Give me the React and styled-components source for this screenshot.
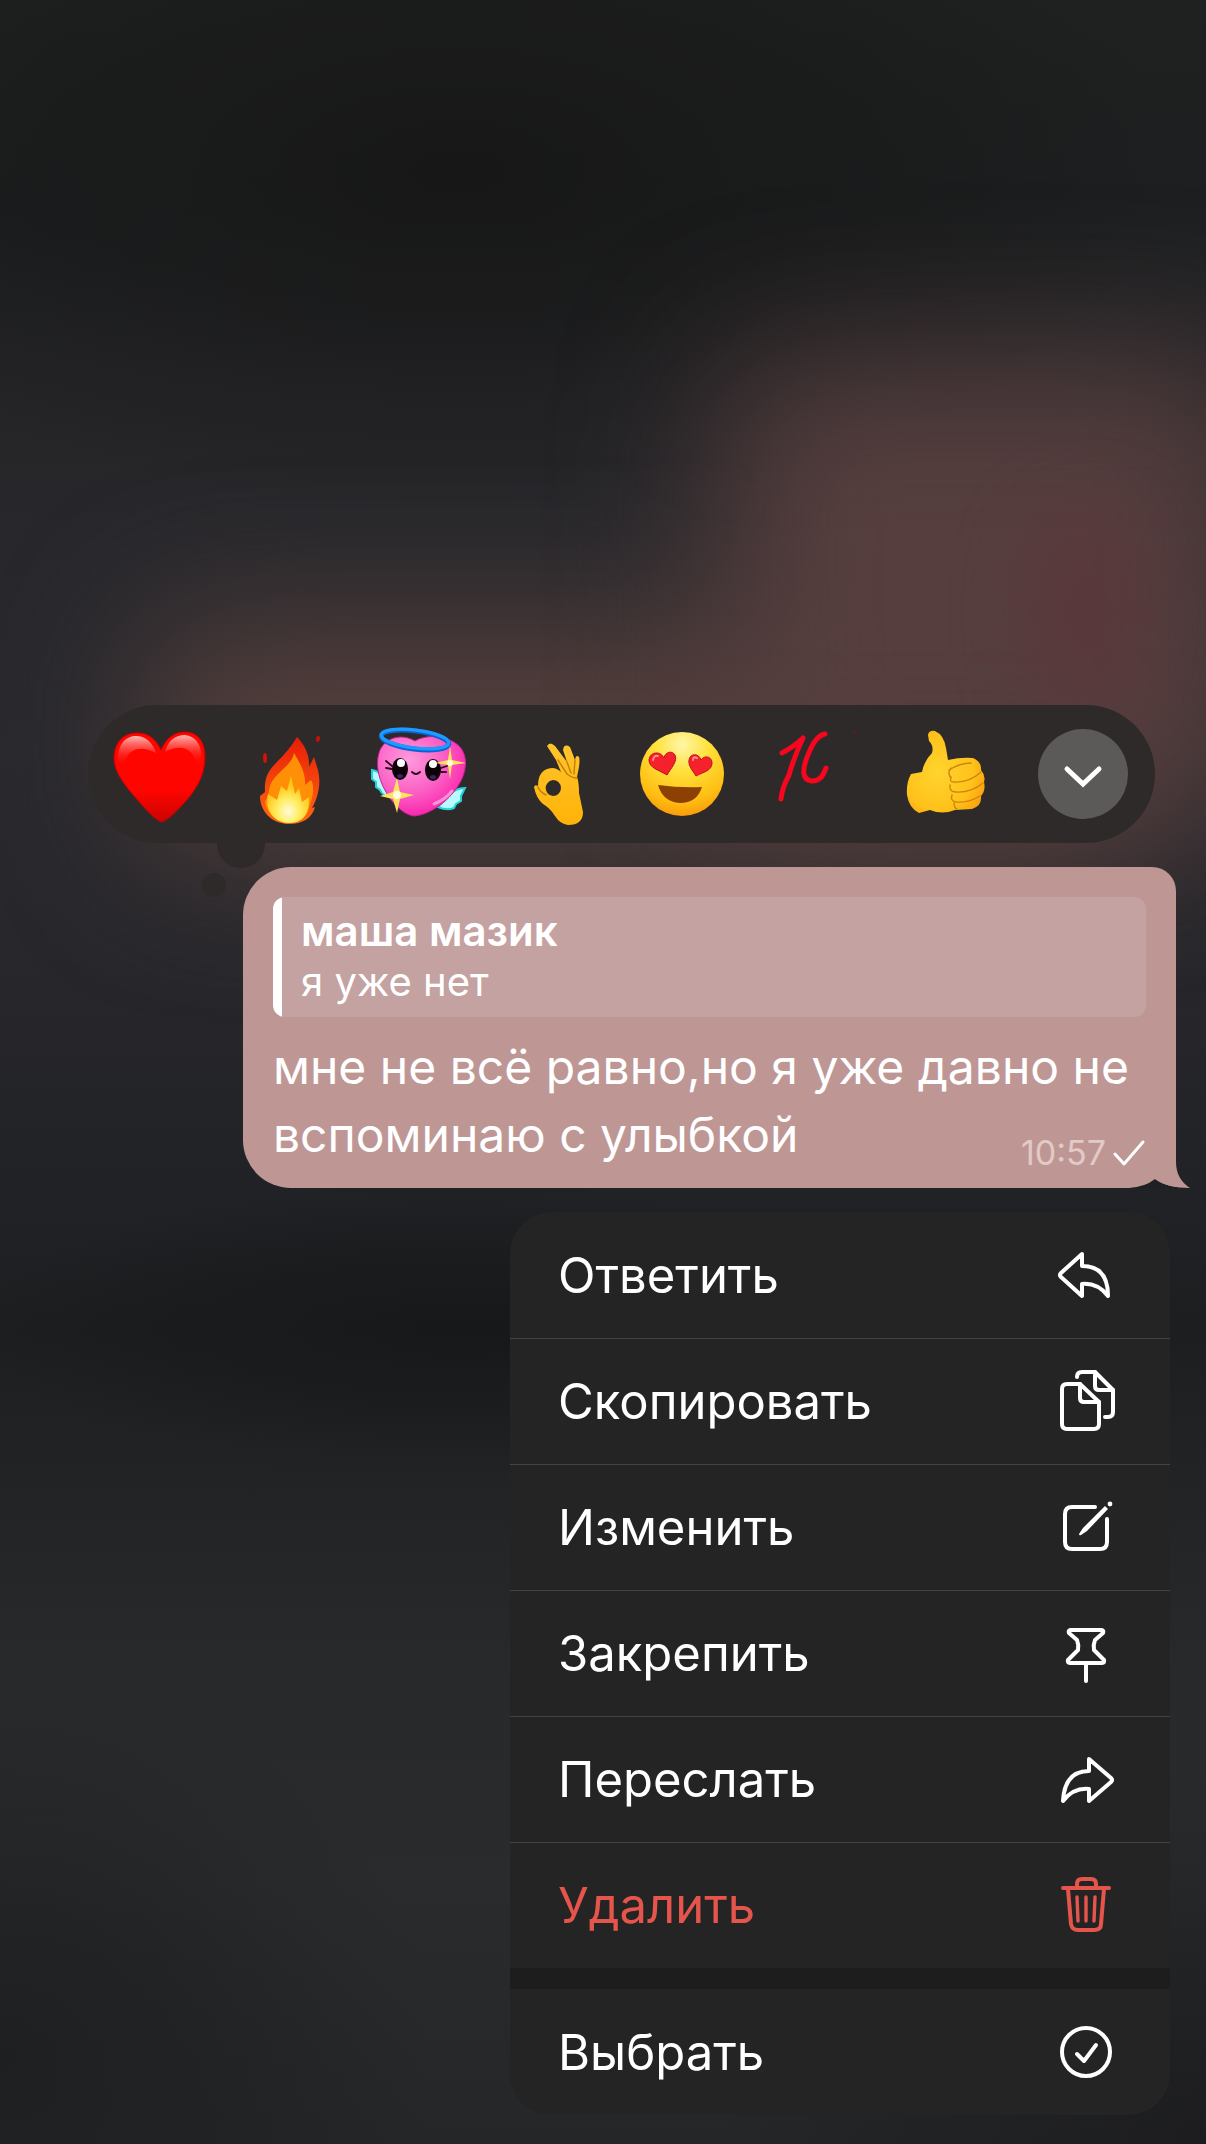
import styled, { createGlobalStyle } from "styled-components";

const menuItems = [
  { key: "reply", label: "Ответить" },
  { key: "copy", label: "Скопировать" },
  { key: "edit", label: "Изменить" },
  { key: "pin", label: "Закрепить" },
  { key: "forward", label: "Переслать" },
  { key: "remove", label: "Удалить", danger: true },
];

const icons = {
  reply: (
    <path d="M32 15 L11 34 Q9 36 11 38 L32 57 V45 C43 44 51 48 58 57 C58 39 51 27 32 27 Z" />
  ),
  copy: (
    <>
      <path d="M30 18 H17 Q12 18 12 23 V58 Q12 63 17 63 H44 Q49 63 49 58 V36 Z" />
      <path d="M30 18 V32 Q30 36 34 36 H49" />
      <path d="M27 11 Q27 6 32 6 H45 L63 24 V46 Q63 51 58 51 H55" />
      <path d="M45 6 V20 Q45 24 49 24 H63" />
    </>
  ),
  edit: (
    <>
      <path d="M45 15 H22 Q15 15 15 22 V50 Q15 57 22 57 H50 Q57 57 57 50 V27" />
      <path
        d="M55 14 L33 36 L29 42 Q29 44 31 43 L37 39 L58 17 Z"
        fill="currentColor"
        stroke="none"
      />
      <circle cx="60" cy="12" r="2.4" fill="currentColor" stroke="none" />
    </>
  ),
  pin: (
    <>
      <path d="M20 12 H52 Q54 13 53 15 L45 22 Q43 27 44 32 L54 42 Q55 45 52 45 H20 Q17 45 18 42 L28 32 Q29 27 27 22 L19 15 Q18 13 20 12 Z" />
      <path d="M36 46 V63" />
    </>
  ),
  forward: (
    <path d="M39 15 L61 34 Q63 36 61 38 L39 57 V45 C29 44 20 48 13 57 C14 38 22 27 39 27 Z" />
  ),
  remove: (
    <>
      <path d="M13 18 H59" />
      <path d="M27 17 V14 Q27 9 32 9 H41 Q46 9 46 14 V17" />
      <path d="M18 19 L21 54 Q22 60 28 60 H44 Q51 60 51 54 L54 19" />
      <path d="M27 27 L28 51 M36 27 V51 M45 27 L44 51" strokeWidth="3.4" />
    </>
  ),
  select: (
    <>
      <circle cx="36" cy="36" r="24" />
      <path d="M27 38 L34 45 L46 29" />
    </>
  ),
};

const MenuIcon = ({ name }) => (
  <IconSvg viewBox="0 0 72 72" aria-hidden="true">
    {icons[name]}
  </IconSvg>
);

const Heart = () => (
  <Emoji viewBox="0 0 96 96">
    <defs>
      <linearGradient id="heartShine" x1="0" y1="0" x2="0" y2="1">
        <stop offset="0" stopColor="#ffb9b4" />
        <stop offset="1" stopColor="#ff1a12" stopOpacity="0" />
      </linearGradient>
      <linearGradient id="heartFill" x1="0" y1="0" x2="0" y2="1">
        <stop offset="0.65" stopColor="#fe0500" />
        <stop offset="1" stopColor="#c80400" />
      </linearGradient>
    </defs>
    <path
      d="M49 24 C43 11 34 6 23 7 C9 8 2 19 2 32 C2 46 12 58 22 70 C31 80 42 94 50 96 C58 93 70 80 79 69 C88 57 93 45 93 31 C93 16 86 6 73 6 C62 6 54 12 49 24 Z"
      fill="url(#heartFill)"
      stroke="#c80000"
      strokeWidth="1"
    />
    <path
      d="M6 36 C5 18 14 10 24 10 C34 10 41 17 44 27 C31 20 17 20 12 38 Q8 42 6 36 Z"
      fill="url(#heartShine)"
    />
    <path
      d="M53 26 C56 14 64 9 73 9 C84 10 91 20 89 35 Q87 40 84 37 C80 19 65 19 53 26 Z"
      fill="url(#heartShine)"
    />
  </Emoji>
);

const Fire = () => (
  <Emoji viewBox="0 0 96 96">
    <defs>
      <radialGradient id="fireCore" cx="0.5" cy="0.75" r="0.55">
        <stop offset="0" stopColor="#fffcd8" />
        <stop offset="0.5" stopColor="#ffed60" />
        <stop offset="1" stopColor="#ffc61a" />
      </radialGradient>
      <linearGradient id="fireEdge" x1="0" y1="0" x2="0" y2="1">
        <stop offset="0" stopColor="#e81c08" />
        <stop offset="1" stopColor="#ff6a10" />
      </linearGradient>
    </defs>
    <path
      d="M55 11 C50 20 42 29 33 38 C26 45 22 53 23 66 L18 70 C18 84 28 97 46 98 C61 98 70 92 73 81 L70 82 C77 70 79 56 76 44 L72 31 L67 41 C68 29 62 18 55 11 Z"
      fill="url(#fireEdge)"
    />
    <path
      d="M52 27 C50 38 40 42 31 54 C25 63 29 66 23 76 C26 91 37 97 47 97 C59 97 66 90 68 78 C72 69 72 58 69 54 L63 59 C64 46 57 36 52 27 Z"
      fill="#ff8f06"
    />
    <path
      d="M49 50 L45 65 L39 60 L35 74 L26 68 C22 86 34 97 47 97 C60 97 68 89 67 71 L60 76 L57 62 L53 68 Z"
      fill="url(#fireCore)"
    />
    <ellipse cx="23" cy="32" rx="2" ry="5" fill="#d21206" />
    <ellipse cx="76" cy="13" rx="2" ry="3" fill="#c21206" transform="rotate(15 76 13)" />
  </Emoji>
);

const AngelHeart = () => (
  <Emoji viewBox="0 0 96 96">
    <defs>
      <radialGradient id="angelBody" cx="0.35" cy="0.3" r="0.75">
        <stop offset="0" stopColor="#ff9bdd" />
        <stop offset="0.55" stopColor="#fb5fc4" />
        <stop offset="1" stopColor="#fb1faa" />
      </radialGradient>
    </defs>
    <path
      d="M0 44 Q8 45 13 54 L17 71 Q10 69 8 64 L4 61 L4 56 L0 53 Z"
      fill="#b6fbff"
      stroke="#23d0dc"
      strokeWidth="2"
    />
    <path
      d="M93 62 Q83 62 76 70 L66 81 Q75 85 82 82 L84 78 L89 75 L89 70 Z"
      fill="#b6fbff"
      stroke="#23d0dc"
      strokeWidth="2"
    />
    <path
      d="M43 15 C31 8 15 10 8 24 C4 34 5 46 10 58 C17 74 29 88 42 90 C57 89 76 76 86 60 C95 46 97 29 86 19 C72 8 53 9 43 15 Z"
      fill="url(#angelBody)"
      stroke="#c3228f"
      strokeWidth="1"
    />
    <path d="M62 78 Q74 73 80 65" stroke="#ff8fd6" strokeWidth="3" fill="none" strokeLinecap="round" />
    <ellipse cx="43" cy="14" rx="34" ry="9" transform="rotate(7 43 14)" fill="none" stroke="#0a62d6" strokeWidth="5" />
    <ellipse cx="43" cy="13" rx="34" ry="9" transform="rotate(7 43 13)" fill="none" stroke="#1e9bff" strokeWidth="3.4" />
    <ellipse cx="28" cy="43" rx="8" ry="11" fill="#0d0208" />
    <ellipse cx="61" cy="44" rx="8" ry="11" fill="#0d0208" />
    <circle cx="29" cy="37" r="4" fill="#fff" />
    <circle cx="61" cy="38" r="4" fill="#fff" />
    <ellipse cx="28" cy="50" rx="3" ry="2" fill="#3d1f63" />
    <ellipse cx="61" cy="51" rx="3" ry="2" fill="#3d1f63" />
    <path
      d="M40 46 Q44 50 48 46 M20 40 L14 35 M20 43 L14 42 M69 42 L75 40 M69 46 L74 46"
      stroke="#2c0620"
      strokeWidth="1.8"
      fill="none"
      strokeLinecap="round"
    />
    <path d="M78 20 L80 34 L94 37 L80 39 L78 53 L76 39 L63 37 L76 34 Z" fill="#ffe35c" />
    <path d="M25 52 L28 66 L42 69 L28 73 L25 87 L21 73 L8 70 L21 66 Z" fill="#ffe35c" />
    <circle cx="78" cy="37" r="3" fill="#fffbe0" />
    <circle cx="25" cy="69" r="4" fill="#fffbe0" />
  </Emoji>
);

const OkHand = () => (
  <Emoji viewBox="0 0 96 96">
    <defs>
      <linearGradient id="okSkin" x1="0" y1="0" x2="0" y2="1">
        <stop offset="0" stopColor="#ffc42c" />
        <stop offset="1" stopColor="#ffb308" />
      </linearGradient>
    </defs>
    <path
      d="M45 20 Q48 15 53 20 L65 36 L61 24 Q62 17 68 21 L73 34 Q74 28 77 31 Q78 33 77 41 L75 51 Q77 56 77 67 L81 86 Q81 99 66 99 Q58 98 53 90 Q48 82 41 78 Q34 72 32 61 Q33 58 36 60 Q36 43 50 42 Q55 42 59 46 L54 34 Z M51 54 A8 8 0 0 0 44 64 Q45 69 51 70 A8 8 0 0 0 59 62 A8 8 0 0 0 51 54 Z"
      fill="url(#okSkin)"
      fillRule="evenodd"
    />
    <path
      d="M56 34 L65 48 Q70 52 75 52 M65 36 L69 47 M73 34 L72 48 M36 61 Q38 66 44 69"
      fill="none"
      stroke="#c77b05"
      strokeWidth="1.4"
      strokeLinecap="round"
    />
  </Emoji>
);

const HeartEyes = () => (
  <Emoji viewBox="0 0 96 96">
    <defs>
      <radialGradient id="faceFill" cx="0.5" cy="0.15" r="0.9">
        <stop offset="0" stopColor="#fff6a8" />
        <stop offset="0.35" stopColor="#ffe13c" />
        <stop offset="0.75" stopColor="#ffbe12" />
        <stop offset="1" stopColor="#f7920a" />
      </radialGradient>
    </defs>
    <circle cx="50" cy="48" r="42" fill="url(#faceFill)" />
    <path
      d="M32 32 C29 25 18 25 17 34 C17 42 27 44 35 49 C39 42 46 35 43 29 C40 24 33 26 32 32 Z"
      fill="#f5222c"
      stroke="#bd1119"
      strokeWidth="1"
    />
    <path
      d="M69 34 C67 27 58 27 57 34 C56 40 61 45 64 50 C71 46 80 45 80 37 C80 30 72 29 69 34 Z"
      fill="#f5222c"
      stroke="#bd1119"
      strokeWidth="1"
    />
    <path d="M21 34 Q22 29 26 30 M61 34 Q61 30 65 32" stroke="#ff8d8d" strokeWidth="2" fill="none" strokeLinecap="round" />
    <path d="M26 59 Q48 62 70 61 Q65 77 48 77 Q31 76 26 59 Z" fill="#8d4003" />
  </Emoji>
);

const Hundred = () => (
  <Emoji viewBox="0 0 96 96">
    <path
      d="M20 27 Q33 20 41 12 Q32 31 27 49 Q20 62 19 73"
      fill="none"
      stroke="#f8051f"
      strokeWidth="5"
      strokeLinecap="round"
      strokeLinejoin="round"
    />
    <path
      d="M63 8 Q55 9 48 24 C38 46 41 54 50 55 C58 55 61 50 64 42"
      fill="none"
      stroke="#f8051f"
      strokeWidth="5"
      strokeLinecap="round"
    />
    <circle cx="93" cy="6" r="1.5" fill="#6a1420" />
  </Emoji>
);

const ThumbUp = () => (
  <Emoji viewBox="0 0 96 96">
    <defs>
      <radialGradient id="thumbSkin" cx="0.4" cy="0.5" r="0.65">
        <stop offset="0" stopColor="#ffd42e" />
        <stop offset="0.7" stopColor="#ffc21a" />
        <stop offset="1" stopColor="#fba30f" />
      </radialGradient>
    </defs>
    <path
      d="M36 9 Q37 4 43 5 Q52 9 54 22 L56 34 Q69 31 81 32 Q90 36 89 44 Q94 50 92 56 Q94 64 89 70 Q90 80 80 83 L63 84 Q50 89 38 84 L27 87 Q17 82 15 69 Q14 57 19 48 L30 46 Q32 35 40 27 Q42 20 37 15 Z"
      fill="url(#thumbSkin)"
    />
    <path
      d="M57 44 Q68 37 79 37 M59 51 Q57 56 62 56 Q77 57 89 46 M58 59 Q57 66 64 66 Q79 67 91 57 M60 69 Q58 75 64 76 Q77 77 88 70 M59 42 Q55 47 59 52 M62 77 Q62 82 65 83"
      fill="none"
      stroke="#cf850c"
      strokeWidth="1.4"
      strokeLinecap="round"
    />
  </Emoji>
);

const reactions = [
  { key: "Сердце", Picture: Heart },
  { key: "Огонь", Picture: Fire },
  { key: "Ангел", Picture: AngelHeart },
  { key: "Окей", Picture: OkHand },
  { key: "Влюблён", Picture: HeartEyes },
  { key: "Сто", Picture: Hundred },
  { key: "Палец вверх", Picture: ThumbUp },
];

const App = () => {
  return (
    <>
      <GlobalStyle />
      <Page>
        <Backdrop>
          <WideGlow />
          <RightGlow />
          <RedGlow />
        </Backdrop>
        <ReactionBar>
          <ReactionList>
            {reactions.map(({ key, Picture }) => (
              <ReactionBtn key={key} type="button" aria-label={key}>
                <Picture />
              </ReactionBtn>
            ))}
          </ReactionList>
          <MoreBtn type="button" aria-label="Ещё">
            <svg width="42" height="24" viewBox="0 0 42 24">
              <path
                d="M5 5 L21 20 L37 5"
                fill="none"
                stroke="#fff"
                strokeWidth="5"
                strokeLinecap="round"
              />
            </svg>
          </MoreBtn>
        </ReactionBar>
        <Bubble>
          <Reply>
            <ReplyName>маша мазик</ReplyName>
            <ReplyText>я уже нет</ReplyText>
          </Reply>
          <Message>
            мне не всё равно,но я уже давно не вспоминаю с улыбкой
            <Meta>
              <time>10:57</time>
              <svg width="34" height="28" viewBox="0 0 34 28">
                <path
                  d="M3 15 L12 25 L31 3"
                  fill="none"
                  stroke="#fff"
                  strokeWidth="3"
                  strokeLinecap="round"
                  strokeLinejoin="round"
                />
              </svg>
            </Meta>
          </Message>
          <Tail viewBox="0 0 62 30">
            <path d="M0 30 Q16 29 26 21 Q38 30 62 30 Z" fill="#1f2025" />
            <path d="M46 4 H47 Q47 21 61 30 Q38 30 26 21 Z" fill="#be9795" />
          </Tail>
        </Bubble>
        <Menu>
          {menuItems.map((item) => (
            <MenuItem key={item.key} type="button" $danger={item.danger}>
              {item.label}
              <MenuIcon name={item.key} />
            </MenuItem>
          ))}
          <MenuGap />
          <MenuItem type="button">
            Выбрать
            <MenuIcon name="select" />
          </MenuItem>
        </Menu>
      </Page>
    </>
  );
};

export default App;

const GlobalStyle = createGlobalStyle`
  * {
    box-sizing: border-box;
  }
  body {
    margin: 0;
    background: #1f2022;
    font-family: Inter, "Liberation Sans", sans-serif;
    color: #fff;
  }
  button {
    padding: 0;
    border: none;
    background: none;
    font: inherit;
    color: inherit;
    cursor: pointer;
  }
`;

const Page = styled.main`
  position: relative;
  display: flex;
  flex-direction: column;
  gap: 24px;
  min-height: 100vh;
  padding: 705px 30px 28px 88px;
`;

const Backdrop = styled.div`
  position: absolute;
  inset: 0;
  z-index: -1;
  overflow: hidden;
  background: radial-gradient(
      ellipse 60% 16% at 38% 8%,
      rgba(22, 22, 22, 0.9),
      rgba(22, 22, 22, 0)
    ),
    radial-gradient(
      ellipse 40% 7% at 38% 62%,
      rgba(20, 21, 22, 0.7),
      rgba(20, 21, 22, 0)
    ),
    radial-gradient(
      ellipse 36% 18% at 0% 96%,
      rgba(28, 30, 31, 0.9),
      rgba(28, 30, 31, 0)
    ),
    radial-gradient(
      ellipse 40% 18% at 100% 100%,
      rgba(28, 28, 30, 0.9),
      rgba(28, 28, 30, 0)
    ),
    linear-gradient(
      #1f2020 0%,
      #1d1f20 10%,
      #252528 18%,
      #28282c 26%,
      #29292e 35%,
      #27272b 46%,
      #222327 54%,
      #1c1e20 62%,
      #222425 70%,
      #27292a 78%,
      #292b2c 88%,
      #242627 100%
    );
`;

const Glow = styled.div`
  position: absolute;
  border-radius: 60px;
`;

const WideGlow = styled(Glow)`
  left: 12%;
  right: 4%;
  top: 29%;
  height: 11%;
  background: #543f3c;
  filter: blur(70px);
`;

const RightGlow = styled(Glow)`
  left: 60%;
  right: -4%;
  top: 17%;
  height: 21%;
  background: #563e3e;
  filter: blur(76px);
`;

const RedGlow = styled(Glow)`
  left: 86%;
  right: 6%;
  top: 24%;
  height: 9%;
  background: #5c343a;
  filter: blur(40px);
  opacity: 0.7;
`;

const ReactionBar = styled.div`
  position: relative;
  display: flex;
  align-items: center;
  gap: 50px;
  height: 138px;
  margin-right: 21px;
  padding: 0 27px 0 24px;
  border-radius: 69px;
  background: #2f2a2a;
  &::before,
  &::after {
    content: "";
    position: absolute;
    border-radius: 50%;
    background: #2f2a2a;
  }
  &::before {
    left: 129px;
    bottom: -25px;
    width: 48px;
    height: 48px;
  }
  &::after {
    left: 114px;
    bottom: -54px;
    width: 24px;
    height: 24px;
  }
`;

const ReactionList = styled.div`
  position: relative;
  z-index: 1;
  flex: 1;
  display: flex;
  justify-content: space-between;
`;

const ReactionBtn = styled.button`
  width: 96px;
  height: 96px;
`;

const Emoji = styled.svg`
  display: block;
  width: 96px;
  height: 96px;
  overflow: visible;
`;

const MoreBtn = styled.button`
  display: flex;
  align-items: center;
  justify-content: center;
  width: 90px;
  height: 90px;
  padding-top: 4px;
  border-radius: 50%;
  background: #5c5a59;
`;

const Bubble = styled.article`
  position: relative;
  margin-left: 155px;
  padding: 30px 30px 15px;
  border-radius: 48px 24px 0 48px;
  background: #be9795;
`;

const Reply = styled.blockquote`
  margin: 0 0 16px;
  padding: 8px 20px 10px 28px;
  border-radius: 12px;
  background: linear-gradient(to right, #fff 9px, #c4a2a1 9px);
  font-size: 40px;
  line-height: 51px;
`;

const ReplyName = styled.div`
  font-size: 42px;
  font-weight: 600;
`;

const ReplyText = styled.div``;

const Message = styled.p`
  display: flow-root;
  margin: 0;
  font-size: 48px;
  line-height: 68px;
`;

const Meta = styled.span`
  float: right;
  display: flex;
  align-items: center;
  gap: 6px;
  margin-top: 32px;
  font-size: 34px;
  line-height: 40px;
  color: #e3c9c7;
`;

const Tail = styled.svg`
  position: absolute;
  right: -15px;
  bottom: 0;
  width: 62px;
  height: 30px;
`;

const Menu = styled.nav`
  align-self: flex-end;
  display: flex;
  flex-direction: column;
  width: 660px;
  max-width: 100%;
  margin-right: 6px;
  border-radius: 42px;
  background: #242425;
  overflow: hidden;
`;

const MenuItem = styled.button`
  display: flex;
  align-items: center;
  justify-content: space-between;
  height: 126px;
  padding: 0 48px;
  font-size: 49px;
  color: ${({ $danger }) => ($danger ? "#e5554b" : "#fff")};
  & + & {
    border-top: 1px solid #444445;
  }
`;

const MenuGap = styled.div`
  height: 21px;
  background: #1d1d1e;
`;

const IconSvg = styled.svg`
  width: 72px;
  height: 72px;
  fill: none;
  stroke: currentColor;
  stroke-width: 4;
  stroke-linecap: round;
  stroke-linejoin: round;
`;
